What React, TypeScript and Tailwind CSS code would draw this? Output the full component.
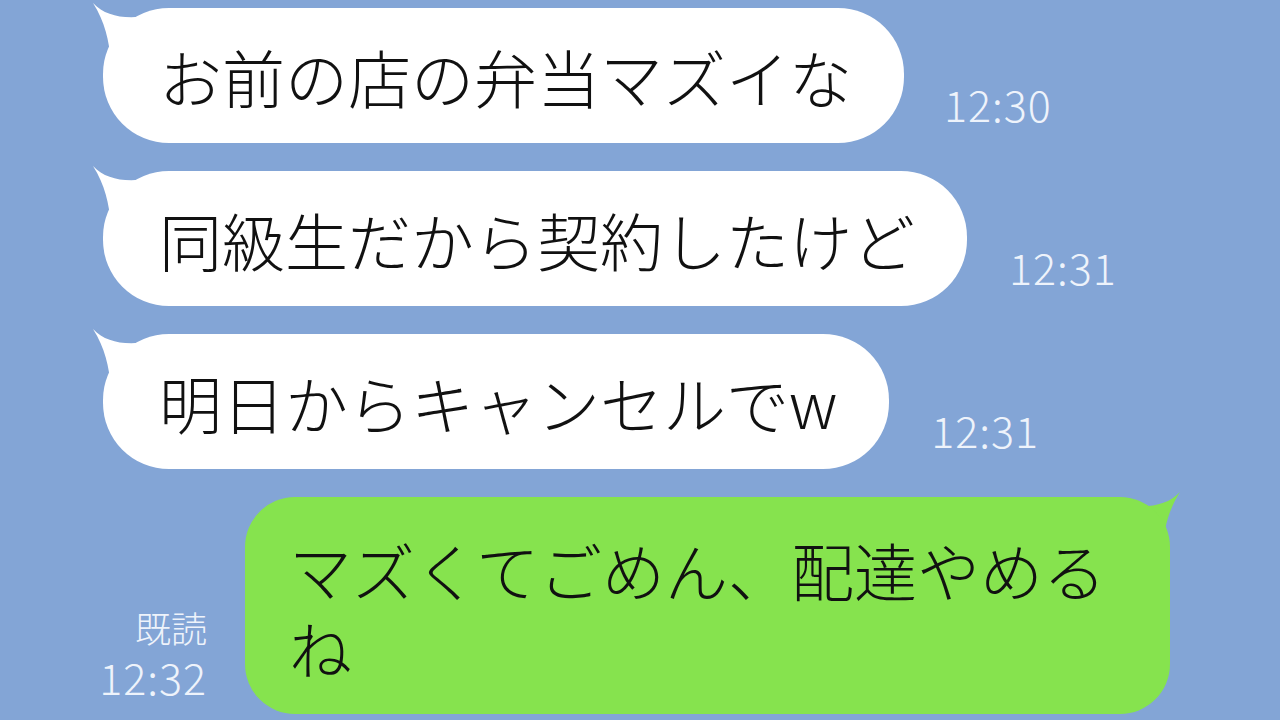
import React from "react";

const font = { fontFamily: '"Noto Sans CJK JP", "Noto Sans", sans-serif' };

function TailLeft({ color }: { color: string }) {
  return (
    <svg
      className="absolute left-[-14px] top-[-8px]"
      width="90"
      height="70"
      viewBox="0 0 90 70"
    >
      <path d="M4 3 C 20 20, 45 20, 80 12 L 80 50 L 22 62 C 20 40, 16 22, 4 3 Z" fill={color} />
    </svg>
  );
}

function TailRight({ color }: { color: string }) {
  return (
    <svg
      className="absolute right-[-14px] top-[-8px]"
      width="90"
      height="70"
      viewBox="0 0 90 70"
    >
      <path d="M86 3 C 70 20, 45 20, 10 12 L 10 50 L 68 62 C 70 40, 74 22, 86 3 Z" fill={color} />
    </svg>
  );
}

function Incoming({ text, time, gap }: { text: string; time: string; gap: string }) {
  return (
    <div className="flex items-end">
      <div className="relative">
        <TailLeft color="#ffffff" />
        <div className="relative flex h-[135px] items-center rounded-[66px] bg-white pl-[56px] pr-[52px] text-[63px] font-light leading-none text-[#111]">
          {text}
        </div>
      </div>
      <div className={`mb-[18px] ${gap} text-[43px] font-light leading-none tracking-[1px] text-[#eef3fb]`}>{time}</div>
    </div>
  );
}

export default function App() {
  return (
    <div className="h-[720px] w-[1280px] overflow-hidden bg-[#83a5d6]" style={font}>
      <div className="flex flex-col gap-[28px] pl-[97px] pt-[8px]">
        <div className="ml-[6px] flex flex-col gap-[28px]">
          <Incoming text="お前の店の弁当マズイな" time="12:30" gap="ml-[40px]" />
          <Incoming text="同級生だから契約したけど" time="12:31" gap="ml-[42px]" />
          <Incoming text="明日からキャンセルでw" time="12:31" gap="ml-[42px]" />
        </div>
        <div className="flex items-end">
          <div className="mb-[16px] mr-[38px] flex w-[110px] flex-col items-end gap-[10px] text-[#eef3fb]">
            <div className="text-[36px] font-light leading-none">既読</div>
            <div className="text-[43px] font-light leading-none tracking-[1px]">12:32</div>
          </div>
          <div className="relative">
            <TailRight color="#86e34e" />
            <div className="relative h-[217px] w-[925px] rounded-[50px] bg-[#86e34e] pl-[44px] pr-[40px] pt-[33px] text-[63px] font-light leading-[78px] text-[#111]">
              マズくてごめん、配達やめる
              <br />ね
            </div>
          </div>
        </div>
      </div>
    </div>
  );
}
